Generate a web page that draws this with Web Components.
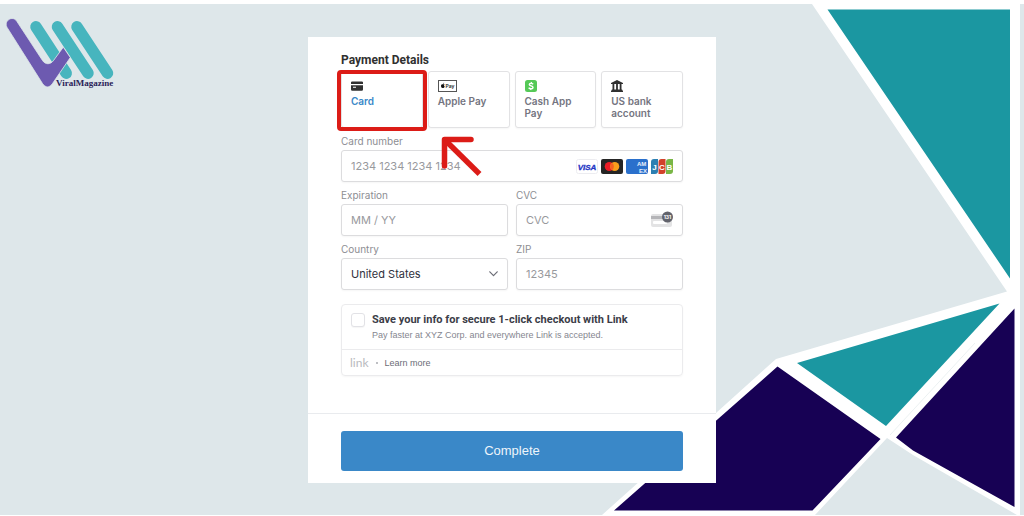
<!DOCTYPE html>
<html lang="en">
<head>
<meta charset="utf-8">
<meta name="viewport" content="width=device-width, initial-scale=1">
<title>Payment Details</title>
<style>
  body { margin: 0; background: #fff; font-family: Inter, "Liberation Sans", sans-serif; color: #30313d; }
</style>
</head>
<body>
<checkout-page>
  <brand-logo slot="brand"></brand-logo>
  <payment-card></payment-card>
</checkout-page>

<script>
const define = (name, html) => {
  const t = document.createElement('template');
  t.innerHTML = html;
  customElements.define(name, class extends HTMLElement {
    constructor() {
      super();
      const root = this.attachShadow({ mode: 'open' });
      root.append(t.content.cloneNode(true));
    }
    connectedCallback() {
      // Copies label and placeholder from the host to the control inside.
      const label = this.shadowRoot.querySelector('label[data-from]');
      if (label) label.textContent = this.getAttribute('label');
      const input = this.shadowRoot.querySelector('input[data-from]');
      if (input) input.placeholder = this.getAttribute('placeholder') || '';
    }
  });
};

define('page-backdrop', `
<style>
  :host { display: block; position: absolute; inset: 0; z-index: -1; }
  svg { display: block; width: 100%; height: 100%; }
</style>
<svg viewBox="0 0 1024 516" preserveAspectRatio="none" aria-hidden="true">
  <rect y="4" width="1024" height="511" fill="#dee7ea"/>
  <path fill="#fff" d="M812 4H1020V515H1017L913 455 887 438 815 515H602L716 413 776 359 1007 291.500Z"/>
  <path fill="#1b97a1" d="M827.500 9.500H1010V278.500ZM797 363 999.500 303.500 886 426Z"/>
  <path fill="#170154" d="M777.500 366.500 880.500 439 812.500 510.500H614ZM1014.500 308.500V507L913 450.500 896 437.500Z"/>
  <path d="M890 435 975 343" stroke="#dee7ea" stroke-width=".6"/>
</svg>`);

define('brand-logo', `
<style>
  :host { display: block; }
  svg { display: block; width: 112px; height: 76px; }
  text { font: bold 9px "Liberation Serif", serif; fill: #2a2258; }
</style>
<svg viewBox="4 16 112 76" role="img" aria-label="ViralMagazine">
  <g stroke="#47b5be" stroke-width="11.500" stroke-linecap="round">
    <path d="M36 26.800 66.200 73.200M57.500 26.800 88 73.200M77 26.800 107.500 73.200"/>
  </g>
  <path fill="#6d5ab0" stroke="#dee7ea" stroke-width=".8" d="M6.900 27.200C4.500 22.500 8.500 18.500 12 18.500 14.200 18.500 15.700 19.500 16.800 21.300L42.500 60.500C45.500 65 50.500 64.500 53.300 60.800L63.300 47.200 70.300 57.500 52.500 83.500C49.500 88 45.500 88 42.500 83.500Z"/>
  <text x="56" y="86">ViralMagazine</text>
</svg>`);

define('method-tile', `
<style>
  :host { display: block; position: relative; }
  button { display: flex; flex-direction: column; align-items: flex-start; gap: 3px; width: 100%; height: 57px;
    box-sizing: border-box; padding: 8px 9px; border: 1px solid #e2e2e4; border-radius: 3px; background: #fff;
    box-shadow: 0 1px 2px rgba(0,0,0,.04); font: 600 10px/12px Inter, sans-serif; color: #74757f; text-align: left; }
  :host([selected]) button { color: #3a88c8; }
  ::slotted(svg) { display: block; height: 12px; }
  .mark { display: none; }
  :host([selected]) .mark { display: block; position: absolute; inset: -1px -4px -3px; border: 4px solid #dc1c17; border-radius: 4px; }
</style>
<button type="button"><slot name="icon"></slot><slot></slot></button>
<span class="mark"></span>`);

const fieldStyle = `
  :host { display: block; position: relative; min-width: 0; }
  label { display: block; padding: 6px 0 2px; font-size: 10px; line-height: 14px; color: #8d8e93; }
  .box { display: flex; align-items: center; gap: 3px; box-sizing: border-box; height: 32px; padding: 0 9px;
    border: 1px solid #dcdcde; border-radius: 3px; background: #fff; box-shadow: 0 1px 2px rgba(0,0,0,.04); }
  input, select { flex: 1; min-width: 0; width: 0; height: 30px; padding: 0; border: 0; outline: 0; background: none;
    appearance: none; font: 11px/16px Inter, sans-serif; color: #30313d; }
  input::placeholder { color: #98999d; opacity: 1; }
  ::slotted(svg), svg { display: block; flex: none; }
`;
define('text-field', `
<style>${fieldStyle}</style>
<label for="control" data-from="label"></label>
<div class="box"><input id="control" type="text" data-from="placeholder"><slot></slot></div>`);

define('country-field', `
<style>${fieldStyle}</style>
<label for="control">Country</label>
<div class="box">
  <select id="control"><option>United States</option></select>
  <svg width="9" height="6" viewBox="0 0 9 6" fill="none" stroke="#6c6d76" stroke-width="1.200" stroke-linecap="round" stroke-linejoin="round"><path d="M.8.8 4.500 4.700 8.200.8"/></svg>
</div>`);

define('card-brands', `
<style>
  :host { display: flex; gap: 3px; }
  svg { display: block; width: 22px; height: 15px; }
  text { font-family: "Liberation Sans", sans-serif; font-weight: bold; }
</style>
<svg viewBox="0 0 22 15"><rect x=".5" y=".5" width="21" height="14" rx="2" fill="#fff" stroke="#ececf0"/><text x="11" y="10.500" font-size="8" font-style="italic" text-anchor="middle" fill="#2334c4" stroke="#2334c4" stroke-width=".3">VISA</text></svg>
<svg viewBox="0 0 22 15"><rect width="22" height="15" rx="2" fill="#252525"/><circle cx="8.300" cy="7.500" r="4.600" fill="#eb1c26"/><circle cx="13.700" cy="7.500" r="4.600" fill="#f79e1b"/><path d="M11 3.800a4.600 4.600 0 0 1 0 7.400 4.600 4.600 0 0 1 0-7.400Z" fill="#f26122"/></svg>
<svg viewBox="0 0 22 15"><rect width="22" height="15" rx="2" fill="#2a70cc"/><g fill="#e9f1fb" font-size="6"><text x="11" y="6.500">AM</text><text x="13" y="13.500">EX</text></g></svg>
<svg viewBox="0 0 22 15"><path d="M3 0H7V12a3 3 0 0 1-3 3H0V3a3 3 0 0 1 3-3Z" fill="#2b7fb2"/><path d="M10.500 0H14.500V12a3 3 0 0 1-3 3H7.500V3a3 3 0 0 1 3-3Z" fill="#d2412a"/><path d="M18 0H22V12a3 3 0 0 1-3 3H15V3a3 3 0 0 1 3-3Z" fill="#79b646"/><g fill="#fff" font-size="8" text-anchor="middle"><text x="3.500" y="10.500">J</text><text x="11" y="10.500">C</text><text x="18.500" y="10.500">B</text></g></svg>`);

define('pointer-arrow', `
<style>
  :host { display: block; position: absolute; left: 100px; top: 8px; z-index: 1; pointer-events: none; }
  svg { display: block; }
</style>
<svg width="41" height="41" viewBox="0 0 41 41" fill="none" stroke="#dc1c17" stroke-width="5.500" stroke-linejoin="round"><path d="M30 3.500H3.500V30" stroke-linecap="round"/><path d="M4 4 38.500 38"/></svg>`);

define('link-signup', `
<style>
  :host { display: block; border: 1px solid #ebebed; border-radius: 4px; box-shadow: 0 1px 2px rgba(0,0,0,.04); }
  .save { display: grid; grid-template-columns: 14px 1fr; column-gap: 7px; padding: 8px 9px; border-bottom: 1px solid #ebebed; }
  input { appearance: none; box-sizing: border-box; width: 14px; height: 14px; margin: 0; border: 1px solid #e2e2e6;
    border-radius: 3px; background: #fff; box-shadow: 0 1px 1px rgba(0,0,0,.04); }
  label { font: bold 11px/14px Roboto, sans-serif; color: #3c3d48; }
  p { grid-column: 2; margin: 2px 0 0; font: 9px/12px "Liberation Sans", sans-serif; color: #85868f; }
  .more { display: flex; align-items: center; gap: 7px; height: 25px; padding: 0 8px; font: 9px/12px "Liberation Sans", sans-serif; color: #b2b3b8; }
  .link { font: 12px/16px Lato, sans-serif; color: #b9babe; }
  .dot { width: 2px; height: 2px; border-radius: 50%; background: #a9aaaf; }
  a { color: #6c6d77; text-decoration: none; }
</style>
<div class="save">
  <input id="save" type="checkbox">
  <label for="save">Save your info for secure 1-click checkout with Link</label>
  <p>Pay faster at XYZ Corp. and everywhere Link is accepted.</p>
</div>
<div class="more"><span class="link">link</span><span class="dot"></span><a href="#learn">Learn more</a></div>`);

define('payment-card', `
<style>
  :host { display: block; background: #fff; }
  .details { padding: 16px 33px 37px; }
  h1 { margin: 0 0 4px; font: bold 12px/14px Roboto, sans-serif; color: #303030; }
  .methods { display: grid; grid-template-columns: repeat(4, minmax(0, 1fr)); gap: 5px; }
  .number { position: relative; }
  .pair { display: grid; grid-template-columns: 1fr 1fr; gap: 0 8px; }
  link-signup { margin-top: 14px; }
  footer { padding: 17px 33px 12px; border-top: 1px solid #e9ebee; }
  .complete { display: block; width: 100%; height: 40px; border: 0; border-radius: 3px; background: #3a88c8; color: #eef5fb;
    font: 13px/16px "Liberation Sans", sans-serif; }
</style>
<section class="details">
  <h1>Payment Details</h1>
  <div class="methods">
    <method-tile selected>
      <svg slot="icon" width="12" height="12" viewBox="0 0 12 12" fill="#303030"><path d="M1.500 1.500h9A1.300 1.300 0 0 1 12 3v1H0V3a1.300 1.300 0 0 1 1.500-1.500Z"/><path fill-rule="evenodd" d="M0 5.200H12V9.500A1.300 1.300 0 0 1 10.700 10.800H1.300A1.300 1.300 0 0 1 0 9.500ZM2 6.800V7.800H5V6.800Z"/></svg>
      Card
    </method-tile>
    <method-tile>
      <svg slot="icon" width="19" height="12" viewBox="0 0 19 12"><rect x=".5" y=".5" width="18" height="11" fill="#fff" stroke="#555"/><path fill="#111" d="M5.200 3.900c0-.7.400-1 .9-1.100 0 .7-.4 1-.9 1.100ZM3 5.800c0-1.600 1.300-1.900 2-1.500.7-.3 1.300-.2 1.600.3-.8.500-.7 1.600.1 2-.3.900-.9 1.700-1.600 1.300C4 8.200 3 7.600 3 5.800Z"/><text x="7.500" y="8" font-family="Inter, sans-serif" font-size="5" font-weight="600" fill="#222">Pay</text></svg>
      Apple Pay
    </method-tile>
    <method-tile>
      <svg slot="icon" width="12" height="12" viewBox="0 0 12 12"><rect width="12" height="12" rx="2.500" fill="#55c957"/><path fill="none" stroke="#fff" stroke-width="1.400" d="M8.200 4.200C7 3 4.300 3 4.300 4.600 4.300 6.300 8 5.600 8 7.400 8 9.100 5 9.100 3.600 7.700M6.500 2 6.200 3.300M5.800 8.600 5.500 10"/></svg>
      Cash App Pay
    </method-tile>
    <method-tile>
      <svg slot="icon" width="12" height="12" viewBox="0 0 12 12" fill="#303030"><path d="M6 0 12 3V4H0V3ZM1.500 4H3.300V10H1.500ZM5.100 4H6.900V10H5.100ZM8.700 4H10.500V10H8.700ZM.8 9.500H11.200V10.400H12V12H0V10.400H.8Z"/></svg>
      US bank account
    </method-tile>
  </div>
  <div class="number">
    <text-field label="Card number" placeholder="1234 1234 1234 1234"><card-brands></card-brands></text-field>
    <pointer-arrow></pointer-arrow>
  </div>
  <div class="pair">
    <text-field label="Expiration" placeholder="MM / YY"></text-field>
    <text-field label="CVC" placeholder="CVC">
      <svg width="22" height="18" viewBox="0 0 22 18"><rect y="3" width="21" height="13" rx="2" fill="#e3e3e4"/><path fill="#b5b5b8" d="M0 5H21V8H0Z"/><rect x="2" y="10" width="14" height="3" rx="1" fill="#fff"/><circle cx="16.500" cy="6" r="5.500" fill="#62636c"/><text x="16.500" y="8" font-family="Inter, sans-serif" font-size="5" font-weight="700" fill="#fff" text-anchor="middle">131</text></svg>
    </text-field>
    <country-field></country-field>
    <text-field label="ZIP" placeholder="12345"></text-field>
  </div>
  <link-signup></link-signup>
</section>
<footer><button class="complete" type="button">Complete</button></footer>`);

define('checkout-page', `
<style>
  :host { display: grid; position: relative; z-index: 0; box-sizing: border-box; min-height: 100vh;
    grid-template-columns: 1fr minmax(0, 408px) 1fr; align-items: start; padding: 16px 0 32px; }
  main { margin-top: 21px; }
  header { padding-left: 4px; }
</style>
<page-backdrop></page-backdrop>
<header><slot name="brand"></slot></header>
<main><slot></slot></main>`);
</script>
</body>
</html>
